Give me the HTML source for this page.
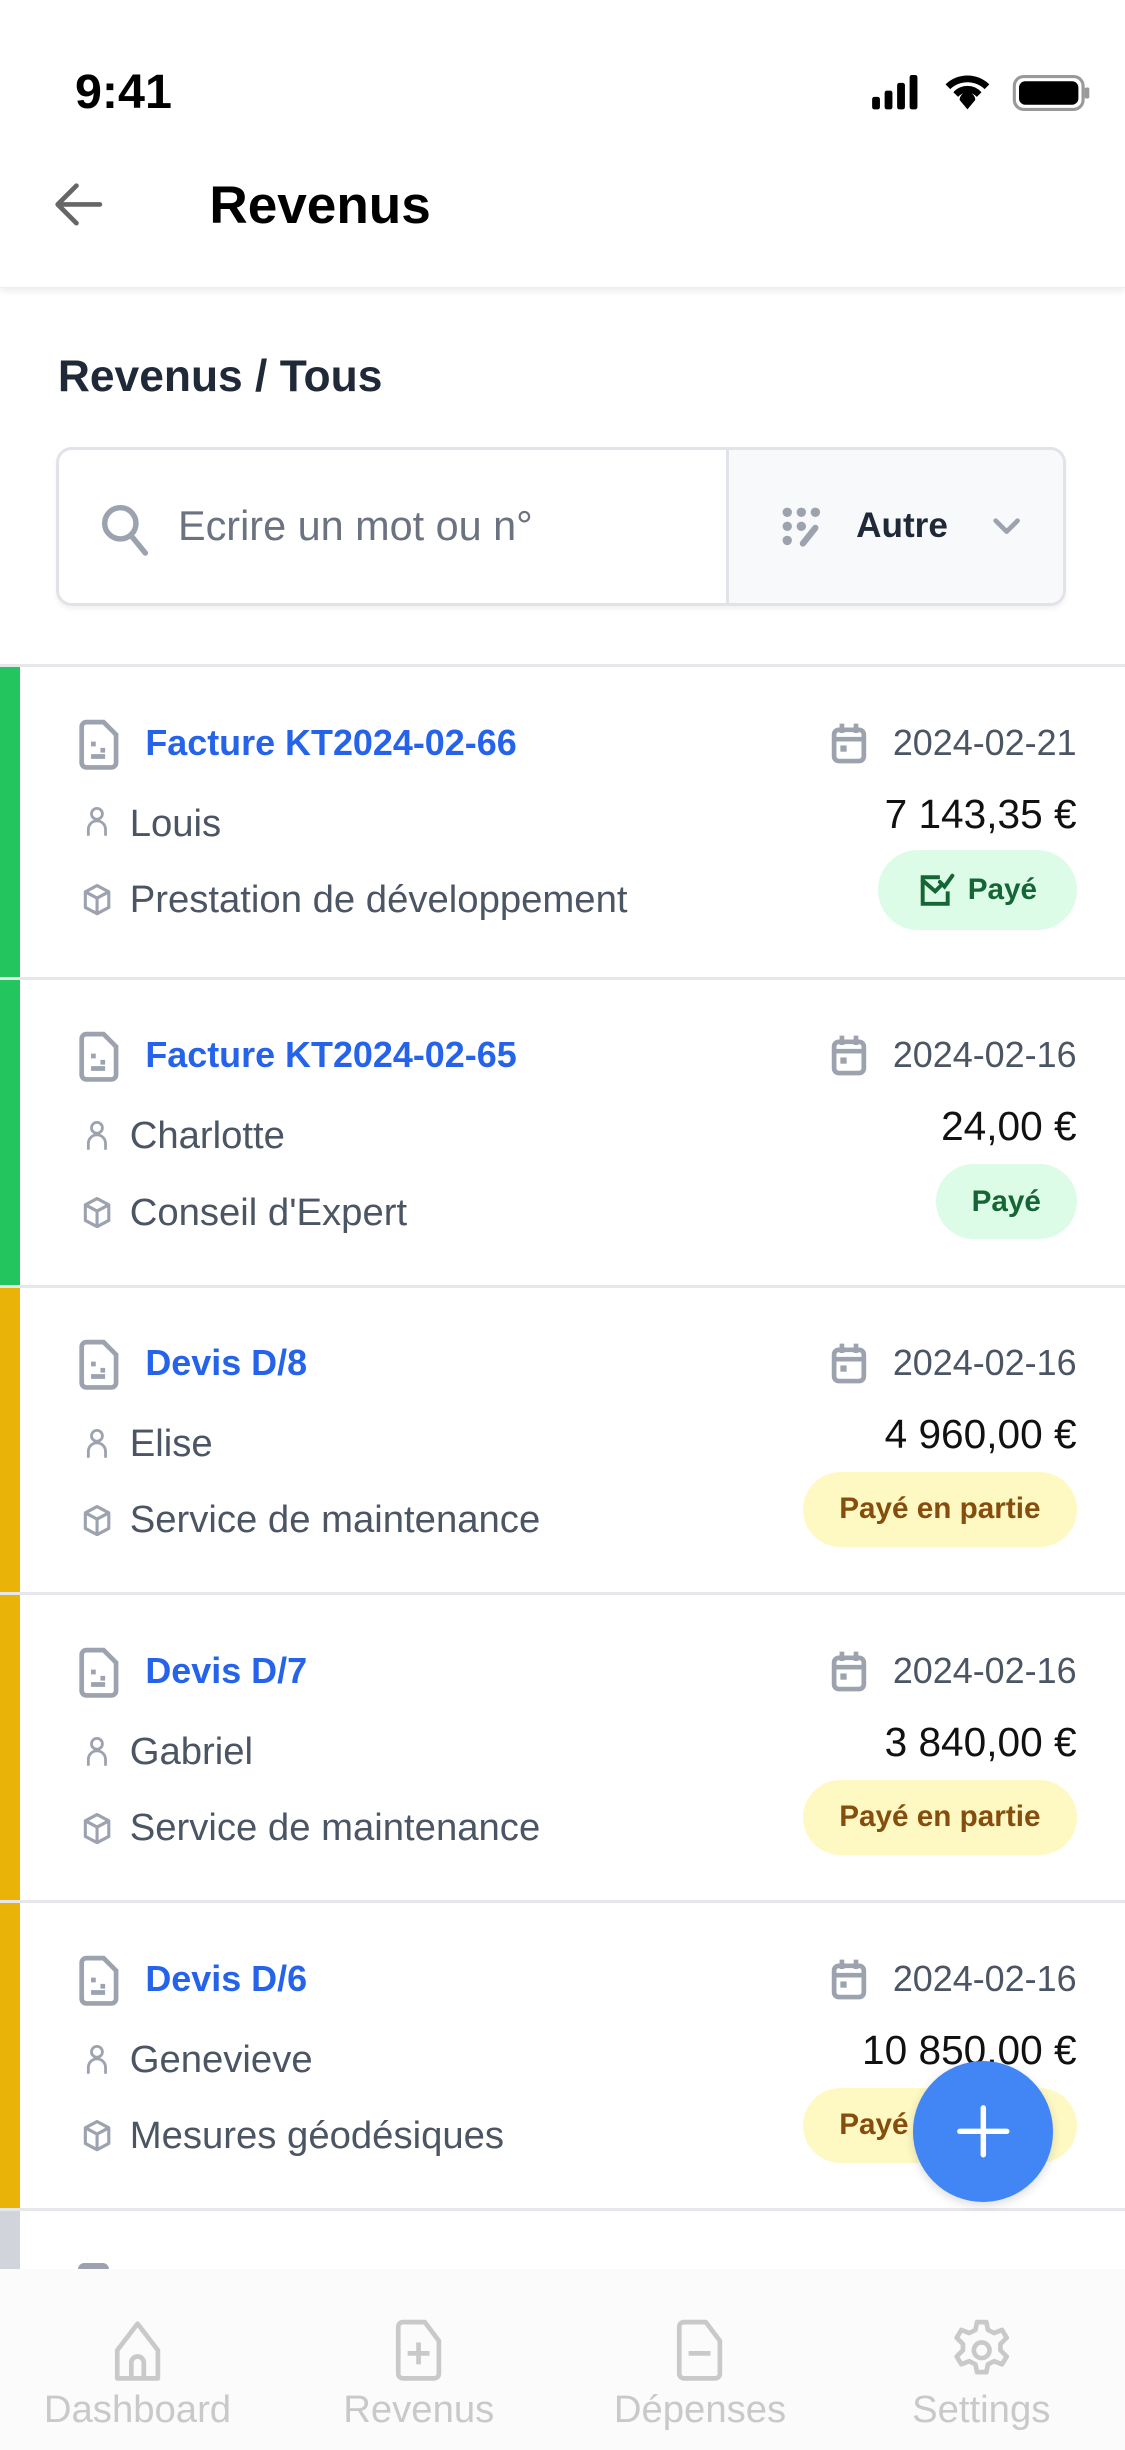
<!DOCTYPE html>
<html><head><meta charset="utf-8"><style>
*{margin:0;padding:0;box-sizing:border-box}
html,body{width:1125px;height:2450px;overflow:hidden;background:#fff}
#r{zoom:1.5625;width:720px;height:1568px;position:relative;font-family:"Liberation Sans",sans-serif;overflow:hidden;background:#fff}
.a{position:absolute}
.card{position:absolute;left:0;width:720px;border-bottom:2px solid #e5e7eb;background:#fff}
.bar{position:absolute;left:0;top:0;bottom:0;width:13px}
.ttl{position:absolute;left:93px;top:35px;font-size:23px;font-weight:bold;color:#2563eb}
.date{position:absolute;right:31px;top:35px;font-size:23px;color:#4b5563}
.nm{position:absolute;left:83px;top:86px;font-size:24.5px;color:#4b5563}
.ds{position:absolute;left:83px;top:135px;font-size:24.5px;color:#4b5563}
.amt{position:absolute;right:31px;top:79px;font-size:26px;color:#111}
.bdg{position:absolute;right:31px;top:117px;height:51px;border-radius:26px;font-size:19px;font-weight:bold;display:flex;align-items:center;justify-content:center;padding:0 22px}
.g{background:#dcfce7;color:#166534}
.y{background:#fef9c3;color:#854d0e}
.ic{position:absolute}
.nav{position:absolute;left:0;top:1452px;width:720px;height:116px;background:#fbfbfb}
.ni{position:absolute;top:0;width:180px;text-align:center;color:#c9c9c9;font-size:24.5px}
.ni svg{display:block;margin:32px auto 4px}
</style></head><body><div id="r">
<div class="a" style="left:48px;top:41px;font-size:31px;font-weight:bold;color:#000">9:41</div>
<svg class="a" style="left:556px;top:48px" width="142" height="24" viewBox="0 0 142 24">
<rect x="2" y="14" width="5" height="8" rx="1.5"/><rect x="10" y="10" width="5" height="12" rx="1.5"/><rect x="18" y="5" width="5" height="17" rx="1.5"/><rect x="26" y="0" width="5" height="22" rx="1.5"/>
<path d="M49 6a20 20 0 0 1 28 0l-3 3a16 16 0 0 0-22 0z M54 11a12 12 0 0 1 18 0l-3 3a8 8 0 0 0-12 0z M58 16a5 5 0 0 1 10 0l-5 6z"/>
<rect x="93" y="1" width="44" height="21" rx="6" fill="none" stroke="#999" stroke-width="2"/><rect x="96" y="4" width="38" height="15" rx="4"/><rect x="138" y="8" width="3" height="7" rx="1" fill="#999"/>
</svg>
<div class="a" style="left:0;top:0;width:720px;height:184px;box-shadow:0 2px 4px rgba(0,0,0,.08);border-bottom:1px solid #eee"></div>
<svg class="a" style="left:34px;top:116px" width="32" height="30" viewBox="0 0 32 30"><path d="M30 15H4M15 3L3 15l12 12" fill="none" stroke="#666" stroke-width="3" stroke-linecap="round" stroke-linejoin="round"/></svg>
<div class="a" style="left:134px;top:112px;font-size:34px;font-weight:bold;color:#000">Revenus</div>
<div class="a" style="left:37px;top:225px;font-size:28.4px;font-weight:bold;color:#1f2937">Revenus / Tous</div>
<div class="a" style="left:36px;top:286px;width:646px;height:102px;border:2px solid #e1e3e8;border-radius:10px;overflow:hidden;box-shadow:0 2px 3px rgba(0,0,0,.05)">
<div class="a" style="left:427px;top:0;width:220px;height:100px;background:#f8f9fb;border-left:2px solid #e1e3e8"></div>
<svg class="a" style="left:26px;top:34px" width="32" height="34" viewBox="0 0 32 34"><circle cx="13" cy="13" r="10" fill="none" stroke="#9ca3af" stroke-width="3.5"/><path d="M20 21l9 11" stroke="#9ca3af" stroke-width="3.5" stroke-linecap="round"/></svg>
<div class="a" style="left:76px;top:34px;font-size:26.5px;color:#6b7280">Ecrire un mot ou n°</div>
<svg class="a" style="left:462px;top:36px" width="28" height="28" viewBox="0 0 28 28" fill="#9ca3af"><circle cx="4" cy="4" r="3"/><circle cx="13" cy="4" r="3"/><circle cx="22" cy="4" r="3"/><circle cx="4" cy="13" r="3"/><circle cx="13" cy="13" r="3"/><circle cx="4" cy="22" r="3"/><path d="M14 24l8-10" stroke="#9ca3af" stroke-width="4" stroke-linecap="round"/></svg>
<div class="a" style="left:510px;top:36px;font-size:22.5px;font-weight:bold;color:#1f2937">Autre</div>
<svg class="a" style="left:596px;top:42px" width="20" height="14" viewBox="0 0 20 14"><path d="M3 3l7 7 7-7" fill="none" stroke="#9ca3af" stroke-width="3" stroke-linecap="round" stroke-linejoin="round"/></svg>
</div>
<div class="a" style="left:0;top:425px;width:720px;height:2px;background:#e5e7eb"></div>

<div class="card" style="top:427px;height:200px"><div class="bar" style="background:#22c55e"></div>
<svg class="ic" style="left:49px;top:33px" width="27" height="33" viewBox="0 0 27 33"><path d="M3 5a3 3 0 0 1 3-3h11l8 8v18a3 3 0 0 1-3 3H6a3 3 0 0 1-3-3z" fill="none" stroke="#9ca3af" stroke-width="3"/><path d="M9 16h3M9 24h9M15 20h3" stroke="#9ca3af" stroke-width="3"/></svg>
<div class="ttl">Facture KT2024-02-66</div>
<svg class="ic" style="left:532px;top:35px" width="23" height="27" viewBox="0 0 23 27"><rect x="2" y="5" width="19" height="20" rx="3" fill="none" stroke="#9ca3af" stroke-width="3"/><path d="M7 1v6M16 1v6M2 11h19" stroke="#9ca3af" stroke-width="3"/><rect x="6" y="15" width="4" height="4" fill="#9ca3af"/></svg>
<div class="date">2024-02-21</div>
<svg class="ic" style="left:55px;top:89px" width="14" height="20" viewBox="0 0 14 20"><circle cx="7" cy="5" r="3.5" fill="none" stroke="#9ca3af" stroke-width="1.8"/><path d="M1.5 19v-4a5.5 5.5 0 0 1 11 0v4" fill="none" stroke="#9ca3af" stroke-width="1.8"/></svg>
<div class="nm">Louis</div>
<svg class="ic" style="left:53px;top:139px" width="18" height="20" viewBox="0 0 18 20"><path d="M9 1l7.5 4v10L9 19l-7.5-4V5zM1.5 5L9 9l7.5-4M9 9v10" fill="none" stroke="#9ca3af" stroke-width="2" stroke-linejoin="round"/></svg>
<div class="ds">Prestation de développement</div>
<div class="amt">7 143,35 €</div>
<div class="bdg g" style="width:127px;padding:0"><svg width="24" height="24" viewBox="0 0 24 24" style="margin-right:8px"><path d="M14 4H3v17h16v-8" fill="none" stroke="#166534" stroke-width="2.5"/><path d="M3 6l8 7 3-3M14 7l3 3 5-7" fill="none" stroke="#166534" stroke-width="2.5" stroke-linecap="round"/></svg>Payé</div>
</div>

<div class="card" style="top:627px;height:197px"><div class="bar" style="background:#22c55e"></div>
<svg class="ic" style="left:49px;top:33px" width="27" height="33" viewBox="0 0 27 33"><path d="M3 5a3 3 0 0 1 3-3h11l8 8v18a3 3 0 0 1-3 3H6a3 3 0 0 1-3-3z" fill="none" stroke="#9ca3af" stroke-width="3"/><path d="M9 16h3M9 24h9M15 20h3" stroke="#9ca3af" stroke-width="3"/></svg>
<div class="ttl">Facture KT2024-02-65</div>
<svg class="ic" style="left:532px;top:35px" width="23" height="27" viewBox="0 0 23 27"><rect x="2" y="5" width="19" height="20" rx="3" fill="none" stroke="#9ca3af" stroke-width="3"/><path d="M7 1v6M16 1v6M2 11h19" stroke="#9ca3af" stroke-width="3"/><rect x="6" y="15" width="4" height="4" fill="#9ca3af"/></svg>
<div class="date">2024-02-16</div>
<svg class="ic" style="left:55px;top:90px" width="14" height="20" viewBox="0 0 14 20"><circle cx="7" cy="5" r="3.5" fill="none" stroke="#9ca3af" stroke-width="1.8"/><path d="M1.5 19v-4a5.5 5.5 0 0 1 11 0v4" fill="none" stroke="#9ca3af" stroke-width="1.8"/></svg>
<div class="nm">Charlotte</div>
<svg class="ic" style="left:53px;top:139px" width="18" height="20" viewBox="0 0 18 20"><path d="M9 1l7.5 4v10L9 19l-7.5-4V5zM1.5 5L9 9l7.5-4M9 9v10" fill="none" stroke="#9ca3af" stroke-width="2" stroke-linejoin="round"/></svg>
<div class="ds">Conseil d'Expert</div>
<div class="amt">24,00 €</div>
<div class="bdg g" style="width:90px;padding:0;height:48px;top:118px">Payé</div>
</div>

<div class="card" style="top:824px;height:197px"><div class="bar" style="background:#eab308"></div>
<svg class="ic" style="left:49px;top:33px" width="27" height="33" viewBox="0 0 27 33"><path d="M3 5a3 3 0 0 1 3-3h11l8 8v18a3 3 0 0 1-3 3H6a3 3 0 0 1-3-3z" fill="none" stroke="#9ca3af" stroke-width="3"/><path d="M9 16h3M9 24h9M15 20h3" stroke="#9ca3af" stroke-width="3"/></svg>
<div class="ttl">Devis D/8</div>
<svg class="ic" style="left:532px;top:35px" width="23" height="27" viewBox="0 0 23 27"><rect x="2" y="5" width="19" height="20" rx="3" fill="none" stroke="#9ca3af" stroke-width="3"/><path d="M7 1v6M16 1v6M2 11h19" stroke="#9ca3af" stroke-width="3"/><rect x="6" y="15" width="4" height="4" fill="#9ca3af"/></svg>
<div class="date">2024-02-16</div>
<svg class="ic" style="left:55px;top:90px" width="14" height="20" viewBox="0 0 14 20"><circle cx="7" cy="5" r="3.5" fill="none" stroke="#9ca3af" stroke-width="1.8"/><path d="M1.5 19v-4a5.5 5.5 0 0 1 11 0v4" fill="none" stroke="#9ca3af" stroke-width="1.8"/></svg>
<div class="nm">Elise</div>
<svg class="ic" style="left:53px;top:139px" width="18" height="20" viewBox="0 0 18 20"><path d="M9 1l7.5 4v10L9 19l-7.5-4V5zM1.5 5L9 9l7.5-4M9 9v10" fill="none" stroke="#9ca3af" stroke-width="2" stroke-linejoin="round"/></svg>
<div class="ds">Service de maintenance</div>
<div class="amt">4 960,00 €</div>
<div class="bdg y" style="width:175px;padding:0;height:48px;top:118px">Payé en partie</div>
</div>

<div class="card" style="top:1021px;height:197px"><div class="bar" style="background:#eab308"></div>
<svg class="ic" style="left:49px;top:33px" width="27" height="33" viewBox="0 0 27 33"><path d="M3 5a3 3 0 0 1 3-3h11l8 8v18a3 3 0 0 1-3 3H6a3 3 0 0 1-3-3z" fill="none" stroke="#9ca3af" stroke-width="3"/><path d="M9 16h3M9 24h9M15 20h3" stroke="#9ca3af" stroke-width="3"/></svg>
<div class="ttl">Devis D/7</div>
<svg class="ic" style="left:532px;top:35px" width="23" height="27" viewBox="0 0 23 27"><rect x="2" y="5" width="19" height="20" rx="3" fill="none" stroke="#9ca3af" stroke-width="3"/><path d="M7 1v6M16 1v6M2 11h19" stroke="#9ca3af" stroke-width="3"/><rect x="6" y="15" width="4" height="4" fill="#9ca3af"/></svg>
<div class="date">2024-02-16</div>
<svg class="ic" style="left:55px;top:90px" width="14" height="20" viewBox="0 0 14 20"><circle cx="7" cy="5" r="3.5" fill="none" stroke="#9ca3af" stroke-width="1.8"/><path d="M1.5 19v-4a5.5 5.5 0 0 1 11 0v4" fill="none" stroke="#9ca3af" stroke-width="1.8"/></svg>
<div class="nm">Gabriel</div>
<svg class="ic" style="left:53px;top:139px" width="18" height="20" viewBox="0 0 18 20"><path d="M9 1l7.5 4v10L9 19l-7.5-4V5zM1.5 5L9 9l7.5-4M9 9v10" fill="none" stroke="#9ca3af" stroke-width="2" stroke-linejoin="round"/></svg>
<div class="ds">Service de maintenance</div>
<div class="amt">3 840,00 €</div>
<div class="bdg y" style="width:175px;padding:0;height:48px;top:118px">Payé en partie</div>
</div>

<div class="card" style="top:1218px;height:197px"><div class="bar" style="background:#eab308"></div>
<svg class="ic" style="left:49px;top:33px" width="27" height="33" viewBox="0 0 27 33"><path d="M3 5a3 3 0 0 1 3-3h11l8 8v18a3 3 0 0 1-3 3H6a3 3 0 0 1-3-3z" fill="none" stroke="#9ca3af" stroke-width="3"/><path d="M9 16h3M9 24h9M15 20h3" stroke="#9ca3af" stroke-width="3"/></svg>
<div class="ttl">Devis D/6</div>
<svg class="ic" style="left:532px;top:35px" width="23" height="27" viewBox="0 0 23 27"><rect x="2" y="5" width="19" height="20" rx="3" fill="none" stroke="#9ca3af" stroke-width="3"/><path d="M7 1v6M16 1v6M2 11h19" stroke="#9ca3af" stroke-width="3"/><rect x="6" y="15" width="4" height="4" fill="#9ca3af"/></svg>
<div class="date">2024-02-16</div>
<svg class="ic" style="left:55px;top:90px" width="14" height="20" viewBox="0 0 14 20"><circle cx="7" cy="5" r="3.5" fill="none" stroke="#9ca3af" stroke-width="1.8"/><path d="M1.5 19v-4a5.5 5.5 0 0 1 11 0v4" fill="none" stroke="#9ca3af" stroke-width="1.8"/></svg>
<div class="nm">Genevieve</div>
<svg class="ic" style="left:53px;top:139px" width="18" height="20" viewBox="0 0 18 20"><path d="M9 1l7.5 4v10L9 19l-7.5-4V5zM1.5 5L9 9l7.5-4M9 9v10" fill="none" stroke="#9ca3af" stroke-width="2" stroke-linejoin="round"/></svg>
<div class="ds">Mesures géodésiques</div>
<div class="amt">10 850,00 €</div>
<div class="bdg y" style="width:175px;padding:0;height:48px;top:118px">Payé en partie</div>
</div>

<div class="card" style="top:1415px;height:100px;border:none"><div class="bar" style="background:#d1d5db"></div>
<div class="a" style="left:50px;top:33px;width:20px;height:6px;border-radius:4px 4px 0 0;background:#9ca3af"></div>
</div>

<div class="a" style="left:584px;top:1319px;width:90px;height:90px;border-radius:50%;background:#4285f4;box-shadow:0 2px 6px rgba(0,0,0,.15)"><svg width="90" height="90" viewBox="0 0 90 90"><path d="M45 30v30M30 45h30" stroke="#fff" stroke-width="3.5" stroke-linecap="round"/></svg></div>

<div class="nav">
<div class="ni" style="left:-2px"><svg width="34" height="40" viewBox="0 0 34 40"><path d="M4 38V20L17 3l13 17v18zM13 38V28a4 4 0 0 1 8 0v10" fill="none" stroke="#c9c9c9" stroke-width="3" stroke-linejoin="round"/></svg>Dashboard</div>
<div class="ni" style="left:178px"><svg width="34" height="40" viewBox="0 0 34 40"><path d="M4 5a3 3 0 0 1 3-3h14l9 12v21a3 3 0 0 1-3 3H7a3 3 0 0 1-3-3z M17 15v14M10 22h14" fill="none" stroke="#c9c9c9" stroke-width="3" stroke-linejoin="round"/></svg>Revenus</div>
<div class="ni" style="left:358px"><svg width="34" height="40" viewBox="0 0 34 40"><path d="M4 5a3 3 0 0 1 3-3h14l9 12v21a3 3 0 0 1-3 3H7a3 3 0 0 1-3-3z M10 22h14" fill="none" stroke="#c9c9c9" stroke-width="3" stroke-linejoin="round"/></svg>Dépenses</div>
<div class="ni" style="left:538px"><svg width="38" height="40" viewBox="0 0 38 40"><path d="M16 2h6l1 5 4 2 5-2 3 5-4 4v4l4 4-3 5-5-2-4 2-1 5h-6l-1-5-4-2-5 2-3-5 4-4v-4l-4-4 3-5 5 2 4-2z" fill="none" stroke="#c9c9c9" stroke-width="3" stroke-linejoin="round"/><circle cx="19" cy="20" r="5" fill="none" stroke="#c9c9c9" stroke-width="3"/></svg>Settings</div>
</div>
</div></body></html>
